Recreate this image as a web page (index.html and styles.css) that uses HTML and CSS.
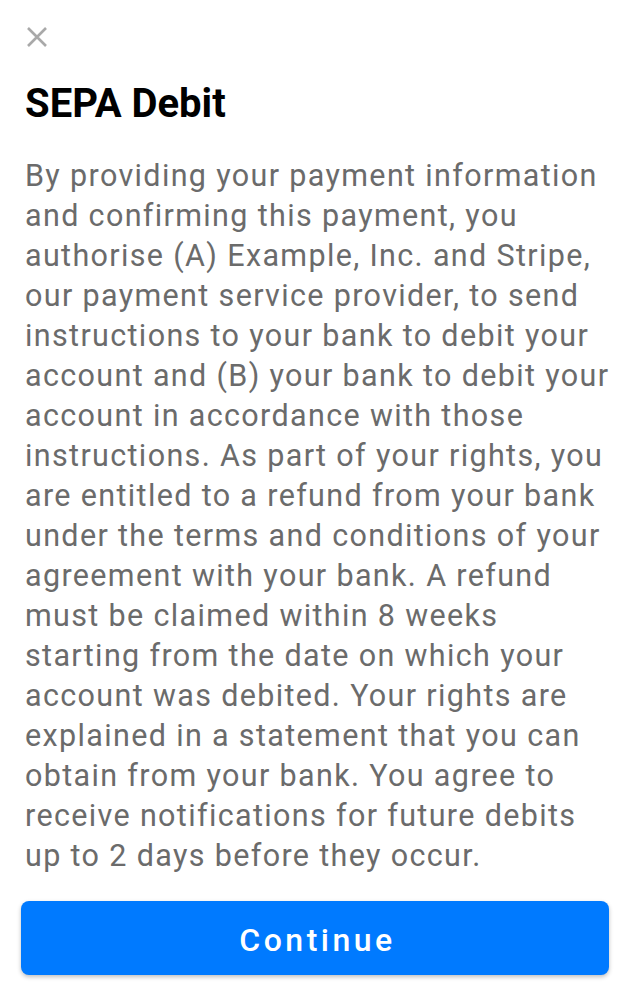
FILE: index.html
```html
<!DOCTYPE html>
<html>
<head>
<meta charset="utf-8">
<link rel="stylesheet" href="styles.css">
</head>
<body>
<div class="sheet">
  <div class="close">
    <svg width="22" height="22" viewBox="0 0 22 22"><path d="M2 2 L20 20 M20 2 L2 20" stroke="#a9a9a9" stroke-width="2.6" fill="none"/></svg>
  </div>
  <h1 class="title">SEPA Debit</h1>
  <p class="mandate">By providing your payment information and confirming this payment, you authorise (A) Example, Inc. and Stripe, our payment service provider, to send instructions to your bank to debit your account and (B) your bank to debit your account in accordance with those instructions. As part of your rights, you are entitled to a refund from your bank under the terms and conditions of your agreement with your bank. A refund must be claimed within 8 weeks starting from the date on which your account was debited. Your rights are explained in a statement that you can obtain from your bank. You agree to receive notifications for future debits up to 2 days before they occur.</p>
  <button class="continue">Continue</button>
</div>
</body>
</html>
```
FILE: styles.css
```css
html, body {
  margin: 0;
  padding: 0;
  background: #ffffff;
}
.sheet {
  width: 634px;
  height: 1000px;
  box-sizing: border-box;
  padding: 26px 25px 0 25px;
  font-family: Roboto, "Liberation Sans", sans-serif;
  display: flex;
  flex-direction: column;
}
.close {
  width: 22px;
  height: 22px;
  margin-left: 1px;
}
.close svg { display: block; }
.title {
  margin: 34px 0 0 0;
  font-size: 40px;
  line-height: 44px;
  font-weight: 700;
  color: #000;
}
.mandate {
  margin: 30px 0 0 0;
  font-size: 30.5px;
  line-height: 40px;
  letter-spacing: 1.35px;
  color: #6b6b6b;
  width: 592px;
}
.continue {
  margin: 25px 0 0 -4px;
  width: 588px;
  height: 74px;
  border: none;
  border-radius: 8px;
  background: #007aff;
  color: #fff;
  font-family: Roboto, "Liberation Sans", sans-serif;
  font-size: 32px;
  font-weight: 500;
  letter-spacing: 3.5px;
  padding: 4px 0 0 5px;
  box-shadow: 0 2px 4px rgba(0,0,0,0.25);
}
```
